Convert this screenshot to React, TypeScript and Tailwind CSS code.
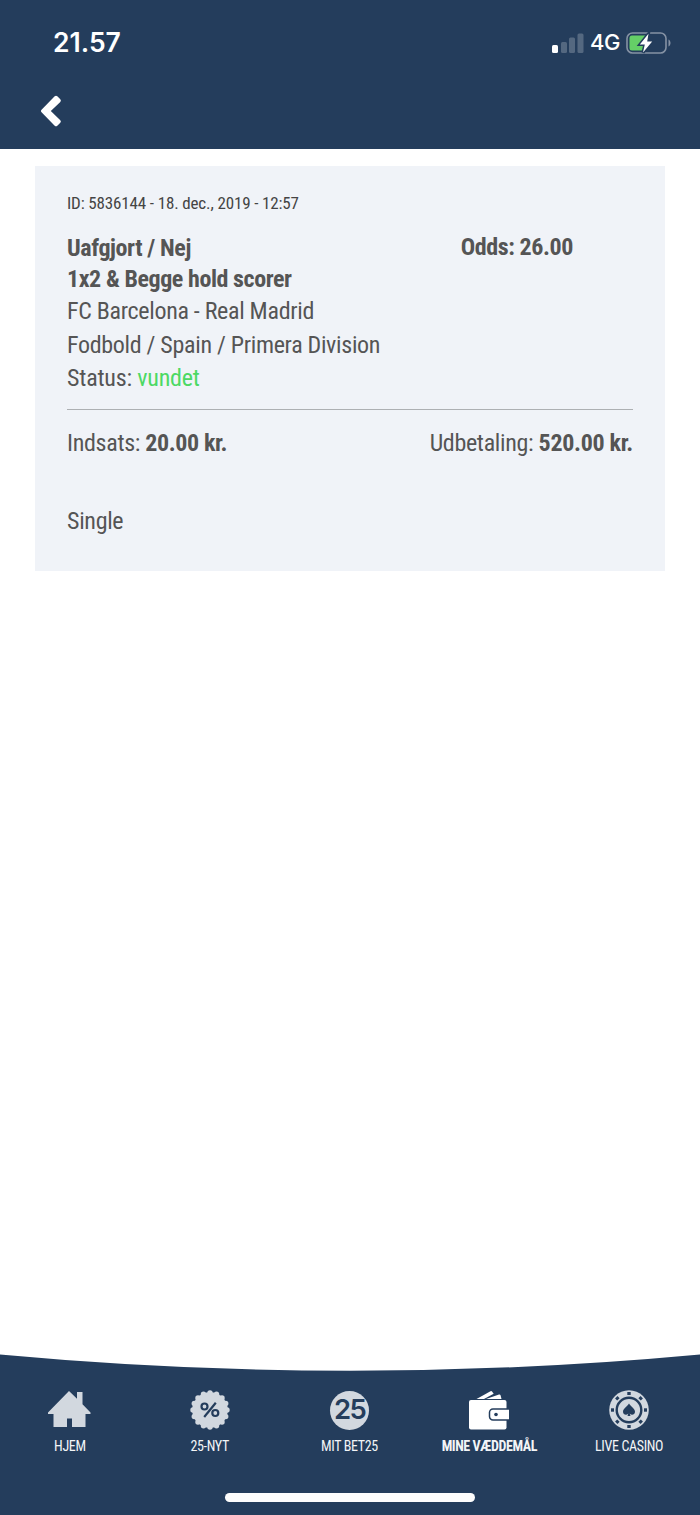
import React from "react";
import clsx from "clsx";

const bet = {
  id: "5836144",
  date: "18. dec., 2019 - 12:57",
  pick: "Uafgjort / Nej",
  market: "1x2 & Begge hold scorer",
  match: "FC Barcelona - Real Madrid",
  league: "Fodbold / Spain / Primera Division",
  status: "vundet",
  odds: "26.00",
  stake: "20.00 kr.",
  payout: "520.00 kr.",
  type: "Single",
};

const App = () => {
  return (
    <div className="flex h-[1515px] w-[700px] flex-col overflow-hidden bg-white font-['Roboto_Condensed','Roboto',sans-serif] font-stretch-[75%]">
      {/* Header */}
      <header className="h-[149px] shrink-0 bg-[#243d5c]">
        <StatusBar />
        <div className="flex pt-2.5 pl-10">
          <svg width="22" height="32" viewBox="0 0 22 32" fill="#fff">
            <path d="M1.300 15 14.700 1.300q1.300-1 2.600 0l3 3q1.200 1.300 0 2.600L10.800 16l9.500 9.200q1.200 1.300 0 2.600l-3 3q-1.300 1-2.600 0L1.300 17q-.8-1 0-2z" />
          </svg>
        </div>
      </header>

      {/* Main Content */}
      <main className="flex-1 px-[35px] pt-[17px]">
        <BetCard />
      </main>

      <TabBar />
    </div>
  );
};

const StatusBar = () => {
  return (
    <div className="flex h-[85px] items-center justify-between pr-7 pl-[53px] font-['Inter',sans-serif] font-stretch-normal text-white">
      <span className="text-[26.500px] font-semibold">21.57</span>
      <div className="flex items-center">
        <svg width="32" height="20" viewBox="0 0 32 20" fill="currentColor">
          <rect x="0" y="12" width="6" height="8" rx="1.500" />
          <g opacity="0.22">
            <rect x="9" y="9" width="6" height="11" rx="1.500" />
            <rect x="17" y="4.500" width="6" height="15.500" rx="1.500" />
            <rect x="25.500" y="0.500" width="6" height="19.500" rx="1.500" />
          </g>
        </svg>
        <span className="ml-1.5 w-[30px] text-[22px] font-medium tracking-[-0.500px]">
          4G
        </span>
        <svg className="ml-1.5" width="46" height="22" viewBox="0 0 46 22">
          <rect
            x="1"
            y="1"
            width="39"
            height="20"
            rx="5.500"
            fill="none"
            stroke="#8592a4"
            strokeWidth="1.600"
          />
          <path d="M42.500 7.500c2.700 1.200 2.700 5.800 0 7z" fill="#8592a4" />
          <path
            d="M6 3.500h13.500v15H6a2.500 2.500 0 0 1-2.500-2.500V6A2.500 2.500 0 0 1 6 3.500z"
            fill="#65cf67"
          />
          <path
            d="M22.500 1.800 13.800 12.600h5L17 20.500 26.200 9.500h-5z"
            fill="#fff"
            stroke="#243d5c"
            strokeWidth="3"
            paintOrder="stroke"
          />
        </svg>
      </div>
    </div>
  );
};

const BetCard = () => {
  return (
    <section className="h-[405px] bg-[#f0f3f8] px-8 pt-[27px] text-2xl tracking-[-0.310px] text-[#555]">
      <p className="h-5 text-[17px] leading-5 tracking-[-0.140px] text-[#444]">
        ID: {bet.id} - {bet.date}
      </p>
      <div className="mt-[19px] flex h-8 justify-between pr-[60px] font-bold tracking-[-0.400px]">
        <span className="leading-[33px]">{bet.pick}</span>
        <span className="leading-[31px]">Odds: {bet.odds}</span>
      </div>
      <p className="leading-[30px] font-bold tracking-[-0.430px]">{bet.market}</p>
      <p className="leading-[35px]">{bet.match}</p>
      <p className="leading-[33px]">{bet.league}</p>
      <p className="leading-8 tracking-[-0.200px]">
        Status: <span className="text-[#4cd964]">{bet.status}</span>
      </p>
      <hr className="mt-[15px] border-[#adb0b3]" />
      <div className="mt-[17px] flex justify-between leading-[33px]">
        <p>
          Indsats: <b className="tracking-[-0.400px]">{bet.stake}</b>
        </p>
        <p>
          Udbetaling: <b>{bet.payout}</b>
        </p>
      </div>
      <p className="mt-[45px] leading-[33px]">{bet.type}</p>
    </section>
  );
};

const TabBar = () => {
  return (
    <footer className="flex h-[161px] shrink-0 flex-col">
      <svg width="700" height="18" viewBox="0 0 700 18" className="block">
        <path d="M0 .5Q350 33 700 .5V18H0z" fill="#243d5c" />
      </svg>
      <div className="flex flex-1 flex-col items-center bg-[#243d5c]">
        <nav className="flex w-full pt-[18px] pr-px">
          <Tab label="HJEM" icon={<HomeIcon />} />
          <Tab label="25-NYT" icon={<OfferIcon />} />
          <Tab label="MIT BET25" icon={<Bet25Icon />} />
          <Tab label="MINE VÆDDEMÅL" icon={<WalletIcon />} active />
          <Tab label="LIVE CASINO" icon={<ChipIcon />} />
        </nav>
        <div className="mt-9 h-[9px] w-[250px] rounded-full bg-[#fdfdfd]" />
      </div>
    </footer>
  );
};

type TabProps = {
  label: string;
  icon: React.ReactNode;
  active?: boolean;
};

const Tab = ({ label, icon, active }: TabProps) => {
  return (
    <div
      className={clsx(
        "flex flex-1 flex-col items-center",
        active ? "font-bold text-white" : "text-[#d2d8df]"
      )}
    >
      {icon}
      <span
        className={clsx(
          "mt-1.5 text-sm leading-[21px] whitespace-nowrap text-[#f3f5f7]",
          active ? "tracking-[-0.450px]" : "tracking-[-0.350px]"
        )}
      >
        {label}
      </span>
    </div>
  );
};

const HomeIcon = () => (
  <svg width="44" height="40" viewBox="0 0 44 40" fill="currentColor">
    <path d="M0 22.500 21 1 29 8.800V2h5.500v12.300l8 8.200V24h-5v13H24v-8.500h-5V37H5.500V24H0z" />
  </svg>
);

const OfferIcon = () => {
  // 16 scallops around the badge
  const bumps = Array.from({ length: 16 }, (_, i) => (i * Math.PI) / 8);

  return (
    <svg width="40" height="40" viewBox="0 0 40 40">
      <g fill="currentColor">
        <circle cx="20" cy="20" r="17.800" />
        {bumps.map((a) => (
          <circle
            key={a}
            cx={20 + 17 * Math.cos(a)}
            cy={20 + 17 * Math.sin(a)}
            r="2.700"
          />
        ))}
      </g>
      <g fill="none" stroke="#243d5c" strokeWidth="2.200">
        <circle cx="14.500" cy="16.500" r="3" />
        <circle cx="25.300" cy="23" r="3" />
        <path d="M25.800 12.800 14.200 27" />
      </g>
    </svg>
  );
};

const Bet25Icon = () => (
  <span className="flex h-10 items-center">
    <span className="flex size-[39px] items-center justify-center rounded-full bg-current">
      <span className="font-['Inter',sans-serif] text-[27.500px] leading-none font-semibold tracking-[-1.800px] text-[#243d5c] font-stretch-normal">
        25
      </span>
    </span>
  </span>
);

const WalletIcon = () => (
  <svg width="40" height="40" viewBox="0 0 40 40" fill="currentColor">
    <path d="M7.500 9 21.500 1.300q1-.5 1.700.4l1.500 2L15 9z" />
    <path d="M17 9 30 4.600q1.200-.3 1.600.8L32.500 9z" />
    <rect x="0" y="10" width="37.500" height="29.500" rx="2" />
    <path
      d="M41 19H24a3.500 3.500 0 0 0-3.500 3.500v4A3.500 3.500 0 0 0 24 30h17"
      stroke="#243d5c"
      strokeWidth="1.500"
    />
    <circle cx="27" cy="24.500" r="1.800" fill="#243d5c" />
  </svg>
);

const ChipIcon = () => (
  <svg width="40" height="40" viewBox="0 0 40 40">
    <circle cx="20" cy="20" r="19.800" fill="currentColor" />
    <circle cx="20" cy="20" r="12.300" fill="none" stroke="#243d5c" strokeWidth="2.400" />
    <g fill="#243d5c">
      {[0, 45, 90, 135, 180, 225, 270, 315].map((deg) => (
        <rect
          key={deg}
          x="18.300"
          y="2"
          width="3.400"
          height="3"
          transform={`rotate(${deg} 20 20)`}
        />
      ))}
      <path d="M20 13.500c1.500 2.800 6 5 6 8.300 0 3-3.700 3.800-5.300 1.700l.8 2.500h-3l.8-2.500c-1.600 2.100-5.300 1.300-5.300-1.700 0-3.300 4.500-5.500 6-8.300z" />
    </g>
  </svg>
);

export default App;
